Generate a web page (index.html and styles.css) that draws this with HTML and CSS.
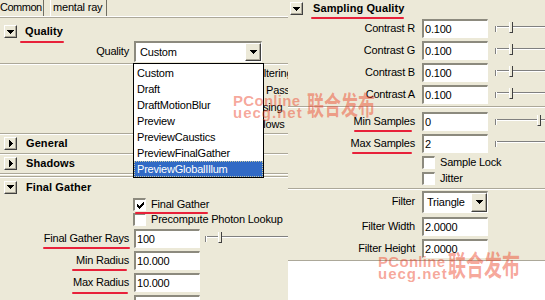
FILE: index.html
```html
<!DOCTYPE html>
<html>
<head>
<meta charset="utf-8">
<link rel="stylesheet" href="styles.css">
</head>
<body>
<div class="screen">
  <div class="left">
    <div class="tabs">
      <div class="tab tab-common">Common</div>
      <div class="tab tab-mr">mental ray</div>
    </div>
    <div class="tabrule"></div>
    <div class="fhead qhead">
      <span class="fbtn"><svg width="7" height="4" viewBox="0 0 7 4"><path d="M0 0h7v1H0zM1 1h5v1H1zM2 2h3v1H2zM3 3h1v1H3z"/></svg></span>
      <span class="ftitle mark mk-q">Quality</span>
    </div>
    <div class="lrow qrow">
      <span class="llbl">Quality</span>
      <div class="combo combo-q"><span class="combo-text">Custom</span><span class="cbtn"><svg width="7" height="4" viewBox="0 0 7 4"><path d="M0 0h7v1H0zM1 1h5v1H1zM2 2h3v1H2zM3 3h1v1H3z"/></svg></span></div>
    </div>
    <div class="etch etch-q"></div>
    <div class="qbody">
      <div class="hid h1">Filtering</div>
      <div class="hid h2">Multi Pass</div>
      <div class="hid h3">Processing</div>
      <div class="hid h4">Glows</div>
    </div>
    <div class="sect sect-gen">
      <span class="fbtn"><svg width="4" height="7" viewBox="0 0 4 7"><path d="M0 0h1v7H0zM1 1h1v5H1zM2 2h1v3H2zM3 3h1v1H3z"/></svg></span>
      <span class="ftitle">General</span>
    </div>
    <div class="sect sect-sha">
      <span class="fbtn"><svg width="4" height="7" viewBox="0 0 4 7"><path d="M0 0h1v7H0zM1 1h1v5H1zM2 2h1v3H2zM3 3h1v1H3z"/></svg></span>
      <span class="ftitle">Shadows</span>
    </div>
    <div class="etch etch-sha"></div>
    <div class="sect sect-fg">
      <span class="fbtn"><svg width="7" height="4" viewBox="0 0 7 4"><path d="M0 0h7v1H0zM1 1h5v1H1zM2 2h3v1H2zM3 3h1v1H3z"/></svg></span>
      <span class="ftitle">Final Gather</span>
    </div>
    <div class="cbrow lcb">
      <span class="cb"><svg width="7" height="7" viewBox="0 0 7 7"><path d="M6 0h1v3H6zM5 1h1v3H5zM4 2h1v3H4zM3 3h1v3H3zM2 4h1v3H2zM1 3h1v3H1zM0 2h1v3H0z"/></svg></span>
      <span class="mark mk-fg">Final Gather</span>
    </div>
    <div class="cbrow lcb">
      <span class="cb"></span>
      <span>Precompute Photon Lookup</span>
    </div>
    <div class="lrow">
      <span class="llbl"><span class="mark mk-rays">Final Gather Rays</span></span>
      <div class="field lfield">100</div>
      <div class="slider"><span class="groove"></span><span class="tick"></span><span class="thumb" style="left:13px"></span></div>
    </div>
    <div class="lrow">
      <span class="llbl"><span class="mark mk-minr">Min Radius</span></span>
      <div class="field lfield">10.000</div>
    </div>
    <div class="lrow">
      <span class="llbl"><span class="mark mk-maxr">Max Radius</span></span>
      <div class="field lfield">10.000</div>
    </div>
    <div class="lrow">
      <span class="llbl"></span>
      <div class="field lfield"></div>
    </div>
  </div>

  <div class="right">
    <div class="fhead rhead">
      <span class="fbtn"><svg width="7" height="4" viewBox="0 0 7 4"><path d="M0 0h7v1H0zM1 1h5v1H1zM2 2h3v1H2zM3 3h1v1H3z"/></svg></span>
      <span class="ftitle mark mk-sq">Sampling Quality</span>
    </div>
    <div class="rrow">
      <span class="rlbl">Contrast R</span>
      <div class="field rfield">0.100</div>
      <div class="slider"><span class="groove"></span><span class="tick"></span><span class="thumb" style="left:14px"></span></div>
    </div>
    <div class="rrow">
      <span class="rlbl">Contrast G</span>
      <div class="field rfield">0.100</div>
      <div class="slider"><span class="groove"></span><span class="tick"></span><span class="thumb" style="left:14px"></span></div>
    </div>
    <div class="rrow">
      <span class="rlbl">Contrast B</span>
      <div class="field rfield">0.100</div>
      <div class="slider"><span class="groove"></span><span class="tick"></span><span class="thumb" style="left:14px"></span></div>
    </div>
    <div class="rrow">
      <span class="rlbl">Contrast A</span>
      <div class="field rfield">0.100</div>
      <div class="slider"><span class="groove"></span><span class="tick"></span><span class="thumb" style="left:14px"></span></div>
    </div>
    <div class="etch etch-r1"></div>
    <div class="rrow rrow-min">
      <span class="rlbl"><span class="mark mk-mins">Min Samples</span></span>
      <div class="field rfield">0</div>
      <div class="slider"><span class="groove"></span><span class="tick"></span><span class="thumb" style="left:42px"></span></div>
    </div>
    <div class="rrow">
      <span class="rlbl"><span class="mark mk-maxs">Max Samples</span></span>
      <div class="field rfield">2</div>
      <div class="slider"><span class="groove"></span><span class="tick"></span></div>
    </div>
    <div class="cbrow rcb">
      <span class="cb"></span>
      <span>Sample Lock</span>
    </div>
    <div class="cbrow rcb">
      <span class="cb"></span>
      <span>Jitter</span>
    </div>
    <div class="etch etch-r2"></div>
    <div class="rrow rrow-filter">
      <span class="rlbl">Filter</span>
      <div class="combo combo-f"><span class="combo-text">Triangle</span><span class="cbtn"><svg width="7" height="4" viewBox="0 0 7 4"><path d="M0 0h7v1H0zM1 1h5v1H1zM2 2h3v1H2zM3 3h1v1H3z"/></svg></span></div>
    </div>
    <div class="rrow rrow-fw">
      <span class="rlbl">Filter Width</span>
      <div class="field rfield">2.0000</div>
    </div>
    <div class="rrow">
      <span class="rlbl">Filter Height</span>
      <div class="field rfield">2.0000</div>
    </div>
    <div class="rbottom"></div>
  </div>

  <ul class="dropdown">
    <li>Custom</li>
    <li>Draft</li>
    <li>DraftMotionBlur</li>
    <li>Preview</li>
    <li>PreviewCaustics</li>
    <li>PreviewFinalGather</li>
    <li class="sel">PreviewGlobalIllum</li>
  </ul>

  <span class="wm wm-pc wm1-pc">PConline</span>
  <span class="wm wm-ue wm1-ue">uecg.net</span>
  <span class="wm wm-cn wm1-cn">联合发布</span>
  <span class="wm wm-pc wm2-pc">PConline</span>
  <span class="wm wm-ue wm2-ue">uecg.net</span>
  <span class="wm wm-cn wm2-cn">联合发布</span>
</div>
</body>
</html>
```

FILE: styles.css
```css
* { box-sizing: border-box; }
html, body { margin: 0; padding: 0; }
body {
  width: 545px;
  height: 300px;
  overflow: hidden;
  background: #ece9d8;
  font-family: "Liberation Sans", Arial, sans-serif;
  font-size: 11px;
  letter-spacing: -0.2px;
  color: #000;
}
.screen {
  position: relative;
  display: flex;
  width: 545px;
  height: 300px;
  overflow: hidden;
}
.left {
  width: 288px;
  flex: none;
  height: 300px;
  overflow: hidden;
  display: flex;
  flex-direction: column;
}
.right {
  width: 257px;
  flex: none;
  height: 300px;
  overflow: hidden;
  display: flex;
  flex-direction: column;
}

/* tabs */
.tabs { display: flex; height: 16px; flex: none; }
.tab { height: 16px; line-height: 15px; white-space: nowrap; overflow: hidden; }
.tab-common { width: 44px; border-right: 1px solid #716f64; letter-spacing: -0.5px; }
.tab-mr {
  margin-left: 6px;
  padding: 0 4px 0 2px;
  border-left: 1px solid #fff;
  border-right: 1px solid #716f64;
}
.tabrule { height: 2px; flex: none; border-top: 1px solid #fff; border-bottom: 1px solid #aca899; }

/* frame headers */
.fhead { display: flex; align-items: center; flex: none; }
.qhead { height: 20px; padding: 7px 0 0 4px; gap: 8px; }
.rhead { height: 17px; padding-left: 2px; gap: 10px; }
.fbtn {
  width: 13px;
  height: 13px;
  flex: none;
  display: flex;
  align-items: center;
  justify-content: center;
  background: #ece9d8;
  border: 1px solid;
  border-color: #fff #404040 #404040 #fff;
  box-shadow: inset -1px -1px 0 #aca899;
}
.fbtn svg, .cbtn svg, .cb svg { display: block; shape-rendering: crispEdges; }
.ftitle { font-weight: bold; letter-spacing: 0.1px; line-height: 13px; }

.sect {
  display: flex;
  align-items: center;
  gap: 9px;
  padding-left: 4px;
  flex: none;
  border-top: 1px solid #aca899;
  box-shadow: inset 0 1px 0 #fff;
}
.sect-gen, .sect-sha { height: 20px; }
.sect-fg { height: 21px; margin-top: 1px; }

.etch { height: 2px; flex: none; border-top: 1px solid #aca899; border-bottom: 1px solid #fff; }
.etch-q { margin-top: 1px; }
.etch-r1 { margin-top: 1px; }
.etch-r2 { margin-top: 2px; }

/* quality body (behind dropdown) */
.qbody { height: 68px; flex: none; line-height: 17px; white-space: nowrap; }
.hid { height: 17px; }
.h1 { padding-left: 255px; }
.h2 { padding-left: 241px; }
.h3 { padding-left: 230px; }
.h4 { padding-left: 255px; }

/* rows */
.lrow { display: flex; align-items: center; height: 22px; flex: none; gap: 5px; }
.qrow { height: 21px; margin-top: 3px; }
.llbl { width: 129px; flex: none; text-align: right; white-space: nowrap; line-height: 13px; }
.rrow { display: flex; align-items: center; height: 22px; flex: none; gap: 7px; }
.rrow-min { margin-top: 2px; }
.rrow-filter { height: 23px; }
.rrow-fw { margin-top: 2px; }
.rlbl { width: 127px; flex: none; text-align: right; white-space: nowrap; line-height: 13px; }

.field {
  height: 19px;
  flex: none;
  background: #fff;
  border-style: solid;
  border-width: 2px 1px 1px 2px;
  border-color: #8c8a7e #fff #fff #8c8a7e;
  padding-left: 1px;
  line-height: 16px;
  white-space: nowrap;
}
.lfield { width: 66px; }
.rfield { width: 66px; }

/* combo */
.combo {
  display: flex;
  align-items: stretch;
  flex: none;
  background: #fff;
  border-style: solid;
  border-width: 2px 1px 1px 2px;
  border-color: #8c8a7e #fff #fff #8c8a7e;
}
.combo-q { width: 128px; height: 21px; }
.combo-f { width: 66px; height: 22px; }
.combo-text { flex: 1; display: flex; align-items: center; white-space: nowrap; overflow: hidden; }
.combo-q .combo-text { padding-left: 4px; }
.combo-f .combo-text { padding-left: 3px; }
.cbtn {
  width: 16px;
  flex: none;
  display: flex;
  align-items: center;
  justify-content: center;
  background: #ece9d8;
  border: 1px solid;
  border-color: #fff #404040 #404040 #fff;
  box-shadow: inset -1px -1px 0 #aca899;
}

/* checkboxes */
.cbrow { display: flex; align-items: center; gap: 5px; flex: none; white-space: nowrap; }
.lcb { height: 15px; padding-left: 133px; }
.rcb { height: 16px; padding-left: 134px; }
.cb {
  width: 13px;
  height: 13px;
  flex: none;
  display: flex;
  align-items: center;
  justify-content: center;
  background: #fff;
  border-style: solid;
  border-width: 2px 1px 1px 2px;
  border-color: #8c8a7e #fff #fff #8c8a7e;
}
.cbrow span:last-child { line-height: 13px; }

/* slider */
.slider { position: relative; width: 100px; height: 12px; flex: none; }
.groove {
  position: absolute;
  left: 0; right: 0; top: 4px;
  height: 2px;
  border-top: 1px solid #808080;
  border-bottom: 1px solid #fff;
}
.tick {
  position: absolute;
  left: 0; top: 4px;
  width: 2px; height: 6px;
  border-left: 1px solid #808080;
  border-right: 1px solid #fff;
}
.thumb {
  position: absolute;
  top: 0;
  width: 4px;
  height: 11px;
  background: #ece9d8;
  border-left: 1px solid #fff;
  border-right: 1px solid #404040;
  border-bottom: 1px solid #404040;
}

.rbottom { flex: 1; margin-top: 1px; background: #fff; border-top: 1px solid #aca899; }

/* red annotation underlines */
.mark { position: relative; display: inline-block; line-height: 13px; }
.mark::after {
  content: "";
  position: absolute;
  height: 2px;
  border-radius: 1px;
  background: #e8213a;
}
.mk-q::after { left: -5px; right: -1px; bottom: -5px; }
.mk-sq::after { left: -2px; right: 0; bottom: -4px; }
.mk-mins::after { left: 0; right: 3px; bottom: -4px; }
.mk-maxs::after { left: 1px; right: 3px; bottom: -4px; }
.mk-fg::after { left: -16px; right: 1px; bottom: -3px; }
.mk-rays::after { left: -1px; right: -1px; bottom: -4px; }
.mk-minr::after { left: -4px; right: 2px; bottom: -4px; }
.mk-maxr::after { left: -1px; right: 1px; bottom: -5px; }

/* dropdown list */
.dropdown {
  position: absolute;
  left: 133px;
  top: 63px;
  width: 131px;
  height: 115px;
  margin: 0;
  padding: 1px 0 0;
  list-style: none;
  background: #fff;
  border: 1px solid #000;
}
.dropdown li { height: 16px; line-height: 16px; padding-left: 3px; white-space: nowrap; }
.dropdown li.sel { background: #316ac5; color: #fff; outline: 1px dotted #c8c8a0; outline-offset: -1px; }

/* watermark */
.wm {
  position: absolute;
  color: rgba(236, 60, 30, 0.45);
  font-weight: bold;
  white-space: nowrap;
  letter-spacing: 0;
}
.wm-pc, .wm-ue { font-family: "Liberation Sans", Arial, sans-serif; font-size: 15px; line-height: 15px; }
.wm-pc { letter-spacing: 0.3px; }
.wm-ue { letter-spacing: 1px; }
.wm-cn {
  font-family: "Noto Sans CJK SC", sans-serif;
  font-size: 17px;
  line-height: 17px;
  transform: scaleY(1.55);
  transform-origin: top left;
}
.wm1-pc { left: 233px; top: 93px; }
.wm1-ue { left: 233px; top: 105px; }
.wm1-cn { left: 307px; top: 90px; }
.wm2-pc { left: 378px; top: 254px; }
.wm2-ue { left: 378px; top: 266px; }
.wm2-cn { left: 448px; top: 249px; font-size: 18px; line-height: 18px; transform: scaleY(1.6); }
```
